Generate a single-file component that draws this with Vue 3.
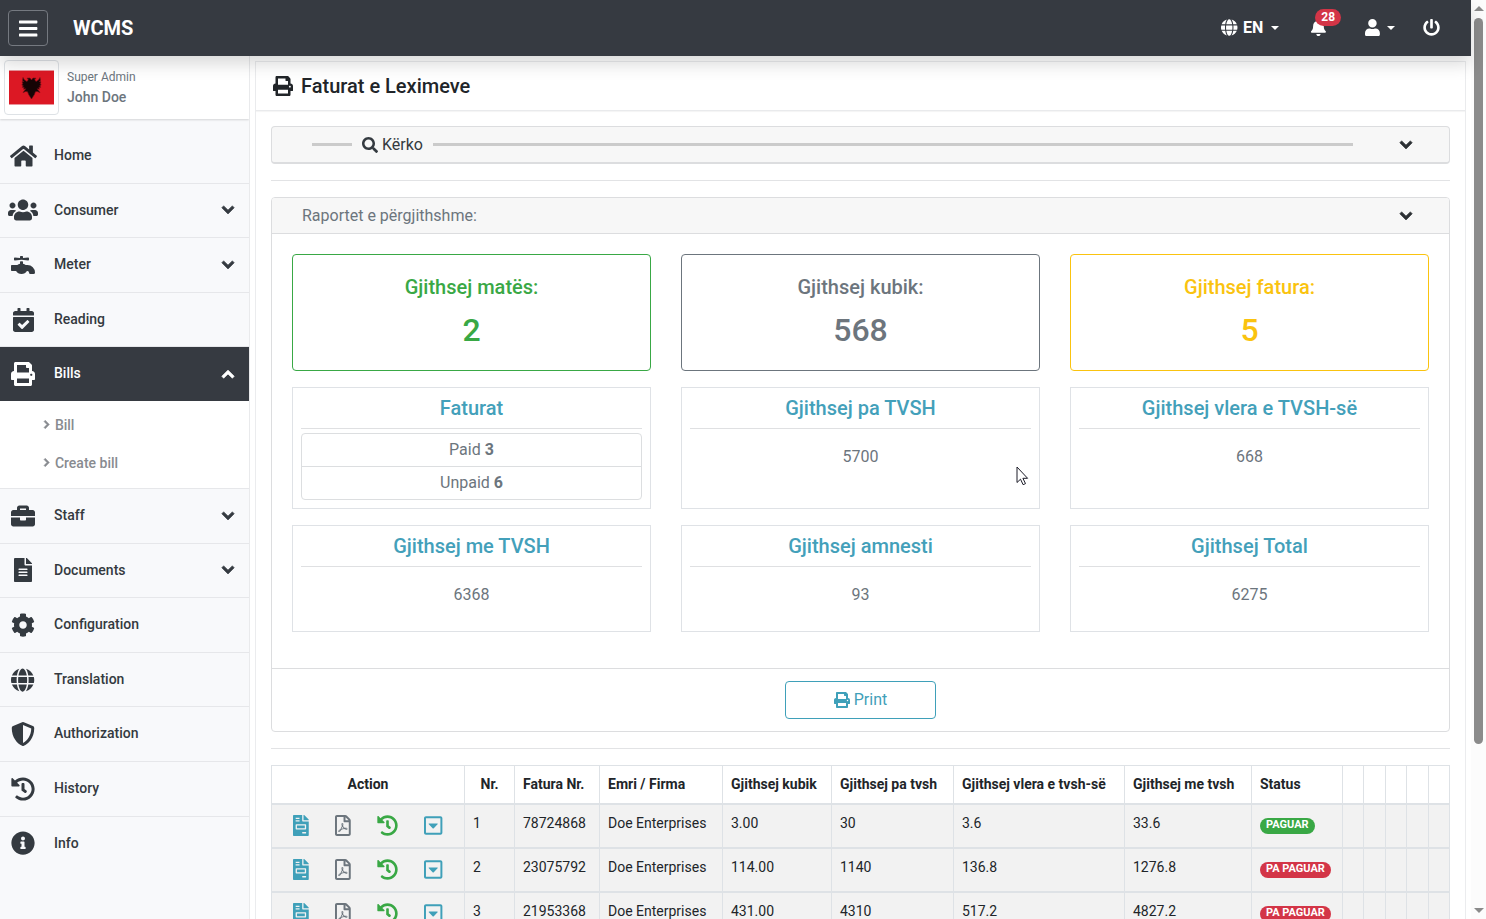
<script setup>
import { ref } from 'vue'

const icons = {
  bars: [448, 'M16 132h416c8.837 0 16-7.163 16-16V76c0-8.837-7.163-16-16-16H16C7.163 60 0 67.163 0 76v40c0 8.837 7.163 16 16 16zm0 160h416c8.837 0 16-7.163 16-16v-40c0-8.837-7.163-16-16-16H16c-8.837 0-16 7.163-16 16v40c0 8.837 7.163 16 16 16zm0 160h416c8.837 0 16-7.163 16-16v-40c0-8.837-7.163-16-16-16H16c-8.837 0-16 7.163-16 16v40c0 8.837 7.163 16 16 16z'],
  home: [576, 'M280.37 148.26L96 300.11V464a16 16 0 0 0 16 16l112.06-.29a16 16 0 0 0 15.92-16V368a16 16 0 0 1 16-16h64a16 16 0 0 1 16 16v95.64a16 16 0 0 0 16 16.05L464 480a16 16 0 0 0 16-16V300L295.67 148.26a12.19 12.19 0 0 0-15.3 0zM571.6 251.47L488 182.56V44.05a12 12 0 0 0-12-12h-56a12 12 0 0 0-12 12v72.61L318.47 43a48 48 0 0 0-61 0L4.34 251.47a12 12 0 0 0-1.6 16.9l25.5 31A12 12 0 0 0 45.15 301l235.22-193.74a12.19 12.19 0 0 1 15.3 0L530.9 301a12 12 0 0 0 16.9-1.6l25.5-31a12 12 0 0 0-1.7-16.93z'],
  users: [640, 'M96 224c35.3 0 64-28.7 64-64s-28.7-64-64-64-64 28.7-64 64 28.7 64 64 64zm448 0c35.3 0 64-28.7 64-64s-28.7-64-64-64-64 28.7-64 64 28.7 64 64 64zm32 32h-64c-17.6 0-33.5 7.1-45.1 18.6 40.3 22.1 68.9 62 75.1 109.4h66c17.7 0 32-14.3 32-32v-32c0-35.3-28.7-64-64-64zm-256 0c61.9 0 112-50.1 112-112S381.9 32 320 32 208 82.1 208 144s50.1 112 112 112zm76.8 32h-8.3c-20.8 10-43.9 16-68.5 16s-47.6-6-68.5-16h-8.3C179.6 288 128 339.6 128 403.2V432c0 26.5 21.5 48 48 48h288c26.5 0 48-21.5 48-48v-28.8c0-63.6-51.6-115.2-115.2-115.2zm-223.7-13.4C161.5 263.1 145.6 256 128 256H64c-35.3 0-64 28.7-64 64v32c0 17.7 14.3 32 32 32h65.9c6.3-47.4 34.9-87.3 75.2-109.4z'],
  faucet: [512, 'M352,256H313.39c-15.71-13.44-35.46-23.07-57.39-28V180.44l-32-3.38-32,3.38V228c-21.93,5-41.68,14.6-57.39,28H16A16,16,0,0,0,0,272v96a16,16,0,0,0,16,16h92.79C129.38,421.73,173,448,224,448s94.62-26.27,115.21-64H352a32,32,0,0,1,32,32,32,32,0,0,0,32,32h64a32,32,0,0,0,32-32A160,160,0,0,0,352,256ZM81.59,159.91l142.41-15,142.41,15c9.42,1,17.59-6.81,17.59-16.8V112.89c0-10-8.17-17.8-17.59-16.81L256,107.74V80a16,16,0,0,0-16-16H208a16,16,0,0,0-16,16v27.74L81.59,96.08C72.17,95.09,64,102.9,64,112.89v30.22C64,153.1,72.17,160.91,81.59,159.91Z'],
  calendar: [448, 'M436 160H12c-6.627 0-12-5.373-12-12v-36c0-26.51 21.49-48 48-48h48V12c0-6.627 5.373-12 12-12h40c6.627 0 12 5.373 12 12v52h128V12c0-6.627 5.373-12 12-12h40c6.627 0 12 5.373 12 12v52h48c26.51 0 48 21.49 48 48v36c0 6.627-5.373 12-12 12zM12 192h424c6.627 0 12 5.373 12 12v260c0 26.51-21.49 48-48 48H48c-26.51 0-48-21.49-48-48V204c0-6.627 5.373-12 12-12zm333.296 95.947l-28.169-28.398c-4.667-4.705-12.265-4.736-16.97-.068L194.12 364.665l-45.98-46.352c-4.667-4.705-12.266-4.736-16.971-.068l-28.397 28.17c-4.705 4.667-4.736 12.265-.068 16.97l82.601 83.269c4.667 4.705 12.265 4.736 16.97.068l142.953-141.805c4.705-4.667 4.736-12.265.068-16.97z'],
  print: [512, 'M448 192V77.25c0-8.49-3.37-16.62-9.37-22.63L393.37 9.37c-6-6-14.14-9.37-22.63-9.37H96C78.33 0 64 14.33 64 32v160c-35.35 0-64 28.65-64 64v112c0 8.84 7.16 16 16 16h48v96c0 17.67 14.33 32 32 32h320c17.67 0 32-14.33 32-32v-96h48c8.84 0 16-7.16 16-16V256c0-35.35-28.65-64-64-64zm-64 256H128v-96h256v96zm0-224H128V64h192v48c0 8.84 7.16 16 16 16h48v96zm48 72c-13.25 0-24-10.75-24-24 0-13.26 10.75-24 24-24s24 10.74 24 24c0 13.25-10.75 24-24 24z'],
  briefcase: [512, 'M320 336c0 8.84-7.16 16-16 16h-96c-8.84 0-16-7.16-16-16v-48H0v144c0 25.6 22.4 48 48 48h416c25.6 0 48-22.4 48-48V288H320v48zm144-208h-80V80c0-25.6-22.4-48-48-48H176c-25.6 0-48 22.4-48 48v48H48c-25.6 0-48 22.4-48 48v80h512v-80c0-25.6-22.4-48-48-48zm-144 0H192V96h128v32z'],
  file: [384, 'M224 136V0H24C10.7 0 0 10.7 0 24v464c0 13.3 10.7 24 24 24h336c13.3 0 24-10.7 24-24V160H248c-13.2 0-24-10.8-24-24zm64 236c0 6.6-5.4 12-12 12H108c-6.6 0-12-5.4-12-12v-8c0-6.6 5.4-12 12-12h168c6.6 0 12 5.4 12 12v8zm0-64c0 6.6-5.4 12-12 12H108c-6.6 0-12-5.4-12-12v-8c0-6.6 5.4-12 12-12h168c6.6 0 12 5.4 12 12v8zm0-72v8c0 6.6-5.4 12-12 12H108c-6.6 0-12-5.4-12-12v-8c0-6.6 5.4-12 12-12h168c6.6 0 12 5.4 12 12zm96-114.1v6.1H256V0h6.1c6.4 0 12.5 2.5 17 7l97.9 98c4.5 4.5 7 10.6 7 16.9z'],
  cog: [512, 'M487.4 315.7l-42.6-24.6c4.3-23.2 4.3-47 0-70.2l42.6-24.6c4.9-2.8 7.1-8.6 5.5-14-11.1-35.6-30-67.8-54.7-94.6-3.8-4.1-10-5.1-14.8-2.3L380.8 110c-17.9-15.4-38.5-27.3-60.8-35.1V25.8c0-5.6-3.9-10.5-9.4-11.7-36.7-8.2-74.3-7.8-109.2 0-5.5 1.2-9.4 6.1-9.4 11.7V75c-22.2 7.9-42.8 19.8-60.8 35.1L88.7 85.5c-4.9-2.8-11-1.9-14.8 2.3-24.7 26.7-43.6 58.9-54.7 94.6-1.7 5.4.6 11.2 5.5 14L67.3 221c-4.3 23.2-4.3 47 0 70.2l-42.6 24.6c-4.9 2.8-7.1 8.6-5.5 14 11.1 35.6 30 67.8 54.7 94.6 3.8 4.1 10 5.1 14.8 2.3l42.6-24.6c17.9 15.4 38.5 27.3 60.8 35.1v49.2c0 5.6 3.9 10.5 9.4 11.7 36.7 8.2 74.3 7.8 109.2 0 5.5-1.2 9.4-6.1 9.4-11.7v-49.2c22.2-7.9 42.8-19.8 60.8-35.1l42.6 24.6c4.9 2.8 11 1.9 14.8-2.3 24.7-26.7 43.6-58.9 54.7-94.6 1.5-5.5-.7-11.3-5.6-14.1zM256 336c-44.1 0-80-35.9-80-80s35.9-80 80-80 80 35.9 80 80-35.9 80-80 80z'],
  globe: [496, 'M336.5 160C322 70.7 287.8 8 248 8s-74 62.7-88.5 152h177zM152 256c0 22.2 1.2 43.5 3.3 64h185.3c2.1-20.5 3.3-41.8 3.3-64s-1.2-43.5-3.3-64H155.3c-2.1 20.5-3.3 41.8-3.3 64zm324.7-96c-28.6-67.9-86.5-120.4-158-141.6 24.4 33.8 41.2 84.7 50 141.6h108zM177.2 18.4C105.8 39.6 47.8 92.1 19.3 160h108c8.7-56.9 25.5-107.8 49.9-141.6zM487.4 192H372.7c2.1 21 3.3 42.5 3.3 64s-1.2 43-3.3 64h114.6c5.5-20.5 8.6-41.8 8.6-64s-3.1-43.5-8.5-64zM120 256c0-21.5 1.2-43 3.3-64H8.6C3.2 212.5 0 233.8 0 256s3.2 43.5 8.6 64h114.6c-2-21-3.2-42.5-3.2-64zm39.5 96c14.5 89.3 48.7 152 88.5 152s74-62.7 88.5-152h-177zm159.3 141.6c71.4-21.2 129.4-73.7 158-141.6h-108c-8.8 56.9-25.6 107.8-50 141.6zM19.3 352c28.6 67.9 86.5 120.4 158 141.6-24.4-33.8-41.2-84.7-50-141.6h-108z'],
  shield: [512, 'M466.5 83.7l-192-80a48.15 48.15 0 0 0-36.9 0l-192 80C27.7 91.1 16 108.6 16 128c0 198.5 114.5 335.7 221.5 380.3 11.8 4.9 25.1 4.9 36.9 0C360.1 472.6 496 349.3 496 128c0-19.4-11.7-36.9-29.5-44.3zM256.1 446.3l-.1-381 175.9 73.3c-3.3 151.4-82.1 261.1-175.8 307.7z'],
  history: [512, 'M504 255.531c.253 136.64-111.18 248.372-247.82 248.468-59.015.042-113.223-20.53-155.822-54.911-11.077-8.94-11.905-25.541-1.839-35.607l11.267-11.267c8.609-8.609 22.353-9.551 31.891-1.984C173.062 425.135 212.781 440 256 440c101.705 0 184-82.311 184-184 0-101.705-82.311-184-184-184-48.814 0-93.149 18.969-126.068 49.932l50.754 50.754c10.08 10.08 2.941 27.314-11.313 27.314H24c-8.837 0-16-7.163-16-16V38.627c0-14.254 17.234-21.393 27.314-11.314l49.372 49.372C129.209 34.136 189.552 8 256 8c136.81 0 247.747 110.78 248 247.531zm-180.912 78.784l9.823-12.63c8.138-10.463 6.253-25.542-4.21-33.679L288 256.349V152c0-13.255-10.745-24-24-24h-16c-13.255 0-24 10.745-24 24v135.651l65.409 50.874c10.463 8.137 25.541 6.253 33.679-4.21z'],
  info: [512, 'M256 8C119.043 8 8 119.083 8 256c0 136.997 111.043 248 248 248s248-111.003 248-248C504 119.083 392.957 8 256 8zm0 110c23.196 0 42 18.804 42 42s-18.804 42-42 42-42-18.804-42-42 18.804-42 42-42zm56 254c0 6.627-5.373 12-12 12h-88c-6.627 0-12-5.373-12-12v-24c0-6.627 5.373-12 12-12h12v-64h-12c-6.627 0-12-5.373-12-12v-24c0-6.627 5.373-12 12-12h64c6.627 0 12 5.373 12 12v100h12c6.627 0 12 5.373 12 12v24z'],
  bell: [448, 'M224 512c35.32 0 63.97-28.65 63.97-64H160.03c0 35.35 28.65 64 63.97 64zm215.39-149.71c-19.32-20.76-55.47-51.99-55.47-154.29 0-77.7-54.48-139.9-127.94-155.16V32c0-17.67-14.32-32-31.98-32s-31.98 14.33-31.98 32v20.84C118.56 68.1 64.08 130.3 64.08 208c0 102.3-36.15 133.53-55.47 154.29-6 6.45-8.66 14.16-8.61 21.71.11 16.4 12.98 32 32.1 32h383.8c19.12 0 32-15.6 32.1-32 .05-7.55-2.61-15.27-8.61-21.71z'],
  user: [448, 'M224 256c70.7 0 128-57.3 128-128S294.7 0 224 0 96 57.3 96 128s57.3 128 128 128zm89.6 32h-16.7c-22.2 10.2-46.9 16-72.9 16s-50.6-5.8-72.9-16h-16.7C60.2 288 0 348.2 0 422.4V464c0 26.5 21.5 48 48 48h352c26.5 0 48-21.5 48-48v-41.6c0-74.2-60.2-134.4-134.4-134.4z'],
  power: [512, 'M400 54.1c63 45 104 118.6 104 201.9 0 136.8-110.8 247.7-247.5 248C120 504.3 8.2 393 8 256.4 7.9 173.1 48.9 99.3 111.8 54.2c11.7-8.3 28-4.8 35 7.7L162.6 90c5.9 10.5 3.1 23.8-6.6 31-41.5 30.8-68 79.6-68 134.9-.1 92.3 74.5 168.1 168 168.1 91.6 0 168.6-74.2 168-169.1-.3-51.8-24.7-101.8-68.1-134-9.7-7.2-12.4-20.5-6.5-30.9l15.8-28.1c7-12.4 23.2-16.1 34.8-7.8zM296 264V24c0-13.3-10.7-24-24-24h-32c-13.3 0-24 10.7-24 24v240c0 13.3 10.7 24 24 24h32c13.3 0 24-10.7 24-24z'],
  search: [512, 'M505 442.7L405.3 343c-4.5-4.5-10.6-7-17-7H372c27.6-35.3 44-79.7 44-128C416 93.1 322.9 0 208 0S0 93.1 0 208s93.1 208 208 208c48.3 0 92.7-16.4 128-44v16.3c0 6.4 2.5 12.5 7 17l99.7 99.7c9.4 9.4 24.6 9.4 33.9 0l28.3-28.3c9.4-9.4 9.4-24.6.1-34zM208 336c-70.7 0-128-57.2-128-128 0-70.7 57.2-128 128-128 70.7 0 128 57.2 128 128 0 70.7-57.2 128-128 128z'],
  down: [448, 'M224 380L28 184 84 124 224 260 364 124 420 184Z'],
  right: [320, 'M296 256L104 450 48 392 182 256 48 120 104 62Z'],
  invoice: [384, 'M288 256H96v64h192v-64zm89-151L279.1 7c-4.5-4.5-10.6-7-17-7H256v128h128v-6.1c0-6.3-2.5-12.4-7-16.9zm-153 31V0H24C10.7 0 0 10.7 0 24v464c0 13.3 10.7 24 24 24h336c13.3 0 24-10.7 24-24V160H248c-13.2 0-24-10.8-24-24zM64 72c0-4.42 3.58-8 8-8h80c4.42 0 8 3.58 8 8v16c0 4.42-3.58 8-8 8H72c-4.42 0-8-3.58-8-8V72zm0 64c0-4.42 3.58-8 8-8h80c4.42 0 8 3.58 8 8v16c0 4.42-3.58 8-8 8H72c-4.42 0-8-3.58-8-8v-16zm256 304c0 4.42-3.58 8-8 8h-80c-4.42 0-8-3.58-8-8v-16c0-4.42 3.58-8 8-8h80c4.42 0 8 3.58 8 8v16zm0-200v96c0 8.84-7.16 16-16 16H80c-8.84 0-16-7.16-16-16v-96c0-8.84 7.16-16 16-16h224c8.84 0 16 7.16 16 16z'],
  pdf: [384, 'M369.9 97.9L286 14C277 5 264.8-.1 252.1-.1H48C21.5 0 0 21.5 0 48v416c0 26.5 21.5 48 48 48h288c26.5 0 48-21.5 48-48V131.9c0-12.7-5.1-25-14.1-34zM332.1 128H256V51.9l76.1 76.1zM48 464V48h160v104c0 13.3 10.7 24 24 24h104v288H48zm250.2-143.7c-12.2-12-47-8.7-64.4-6.5-17.2-10.5-28.7-25-36.8-46.3 3.9-16.1 10.1-40.6 5.4-56-4.2-26.2-37.8-23.6-42.6-5.9-4.4 16.1-.4 38.5 7 67.1-10 23.9-24.9 56-35.4 74.4-20 10.3-47 26.2-51 46.2-3.3 15.8 26 55.2 76.1-31.2 22.4-7.4 46.8-16.5 68.4-20.1 18.9 10.2 41 17 55.8 17 25.5 0 28-28.2 17.5-38.7zm-198.1 77.8c5.1-13.7 24.5-29.5 30.4-35-19 30.3-30.4 35.7-30.4 35zm81.6-190.6c7.4 0 6.7 32.1 1.8 40.8-4.4-13.9-4.3-40.8-1.8-40.8zm-24.4 136.6c9.7-16.9 18-37 24.7-54.7 8.3 15.1 18.9 27.2 30.1 35.5-20.8 4.3-38.9 13.1-54.8 19.2zm131.6-5s-5 6-37.3-7.8c35.1-2.6 40.9 5.4 37.3 7.8z'],
  caretBox: [448, 'M125.1 208h197.8c10.7 0 16.1 13 8.5 20.5l-98.9 98.3c-4.7 4.7-12.2 4.7-16.9 0l-98.9-98.3c-7.7-7.5-2.3-20.5 8.4-20.5zM448 80v352c0 26.5-21.5 48-48 48H48c-26.5 0-48-21.5-48-48V80c0-26.5 21.5-48 48-48h352c26.5 0 48 21.5 48 48zm-48 346V86c0-3.3-2.7-6-6-6H54c-3.3 0-6 2.7-6 6v340c0 3.3 2.7 6 6 6h340c3.3 0 6-2.7 6-6z'],
}
const box = (name) => `0 0 ${icons[name][0]} 512`
const shape = (name) => icons[name][1]

const menu = [
  { label: 'Home', icon: 'home' },
  { label: 'Consumer', icon: 'users', group: true },
  { label: 'Meter', icon: 'faucet', group: true },
  { label: 'Reading', icon: 'calendar' },
  { label: 'Bills', icon: 'print', group: true, children: ['Bill', 'Create bill'] },
  { label: 'Staff', icon: 'briefcase', group: true },
  { label: 'Documents', icon: 'file', group: true },
  { label: 'Configuration', icon: 'cog' },
  { label: 'Translation', icon: 'globe' },
  { label: 'Authorization', icon: 'shield' },
  { label: 'History', icon: 'history' },
  { label: 'Info', icon: 'info' },
]
const active = ref('Bills')
const toggle = (label) => { active.value = active.value === label ? '' : label }

const totals = [
  { label: 'Gjithsej matës:', value: 2, tone: 'green' },
  { label: 'Gjithsej kubik:', value: 568, tone: 'grey' },
  { label: 'Gjithsej fatura:', value: 5, tone: 'yellow' },
]
const sums = [
  { label: 'Faturat', split: [['Paid', 3], ['Unpaid', 6]] },
  { label: 'Gjithsej pa TVSH', value: 5700 },
  { label: 'Gjithsej vlera e TVSH-së', value: 668 },
  { label: 'Gjithsej me TVSH', value: 6368 },
  { label: 'Gjithsej amnesti', value: 93 },
  { label: 'Gjithsej Total', value: 6275 },
]

const columns = [
  { label: 'Action', width: 193 },
  { label: 'Nr.', width: 50 },
  { label: 'Fatura Nr.', width: 85 },
  { label: 'Emri / Firma', width: 123 },
  { label: 'Gjithsej kubik', width: 109 },
  { label: 'Gjithsej pa tvsh', width: 122 },
  { label: 'Gjithsej vlera e tvsh-së', width: 171 },
  { label: 'Gjithsej me tvsh', width: 127 },
  { label: 'Status', width: 91 },
  { label: '', width: 21 },
  { label: '', width: 22 },
  { label: '', width: 21 },
  { label: '', width: 22 },
  { label: '', width: 21 },
]
const rows = [
  { cells: ['1', '78724868', 'Doe Enterprises', '3.00', '30', '3.6', '33.6'], paid: true },
  { cells: ['2', '23075792', 'Doe Enterprises', '114.00', '1140', '136.8', '1276.8'], paid: false },
  { cells: ['3', '21953368', 'Doe Enterprises', '431.00', '4310', '517.2', '4827.2'], paid: false },
]
const actions = [
  { icon: 'invoice', tone: 'teal', label: 'Invoice' },
  { icon: 'pdf', tone: 'grey', label: 'PDF' },
  { icon: 'history', tone: 'green', label: 'History' },
  { icon: 'caretBox', tone: 'teal', label: 'More' },
]
</script>

<template>
  <div class="page">
    <div class="app">
      <header class="topbar">
        <button class="burger" aria-label="Menu">
          <svg class="icon" :viewBox="box('bars')"><path :d="shape('bars')" /></svg>
        </button>
        <a class="brand" href="#">WCMS</a>
        <nav class="tools">
          <button class="tool language">
            <svg class="icon" :viewBox="box('globe')"><path :d="shape('globe')" /></svg>
            <span>EN</span><i class="caret"></i>
          </button>
          <button class="tool alerts" aria-label="Notifications">
            <svg class="icon" :viewBox="box('bell')"><path :d="shape('bell')" /></svg>
            <span class="count">28</span>
          </button>
          <button class="tool account" aria-label="Account">
            <svg class="icon" :viewBox="box('user')"><path :d="shape('user')" /></svg>
            <i class="caret"></i>
          </button>
          <button class="tool" aria-label="Log out">
            <svg class="icon" :viewBox="box('power')"><path :d="shape('power')" /></svg>
          </button>
        </nav>
      </header>

      <div class="columns">
        <aside class="sidebar">
          <div class="profile">
            <div class="photo">
              <svg viewBox="0 0 45 35" class="flag">
                <rect width="45" height="35" fill="#dc1824" />
                <path d="M0 .5h45M0 34.5h45" stroke="#e9939a" />
                <path d="M22.500 10l-1.500-2-3 .2 1.300 1.500-1.300 1.800-2.500-1.500-1.500-2.500-.500 3 1.200 1-1.700 .3.800 2-1 1.200 1.600 .8-1.200 1.400 2 .2-.6 1.800 2.200-.4-2.800 3.800 2.800-1.200 1.800 .4 1 2.700 2.900 4.500 2.900-4.500 1-2.700 1.800-.4 2.800 1.200-2.800-3.800 2.200 .4-.6-1.800 2-.2-1.200-1.400 1.600-.8-1-1.200.8-2-1.700-.3 1.200-1-.5-3-1.500 2.500-2.500 1.500-1.300-1.800 1.300-1.500-3-.2z" fill="#160405" stroke="#701018" stroke-width="1" stroke-opacity=".6" />
              </svg>
            </div>
            <div class="person">
              <span class="role">Super Admin</span>
              <strong class="name">John Doe</strong>
            </div>
          </div>
          <nav class="menu">
            <div v-for="item in menu" :key="item.label" class="entry">
              <button class="item" :class="{ active: active === item.label }" @click="toggle(item.label)">
                <span class="glyph"><svg class="icon" :viewBox="box(item.icon)"><path :d="shape(item.icon)" /></svg></span>
                <span class="label">{{ item.label }}</span>
                <svg v-if="item.group" class="icon chevron arrow" :viewBox="box('down')"><path :d="shape('down')" /></svg>
              </button>
              <div v-if="item.children && active === item.label" class="submenu">
                <a v-for="child in item.children" :key="child" href="#">
                  <svg class="icon chevron" :viewBox="box('right')"><path :d="shape('right')" /></svg>{{ child }}
                </a>
              </div>
            </div>
          </nav>
        </aside>

        <main class="main">
          <div class="panel">
            <h1 class="title">
              <svg class="icon" :viewBox="box('print')"><path :d="shape('print')" /></svg>
              Faturat e Leximeve
            </h1>
            <div class="content">
              <button class="search">
                <i class="line short"></i>
                <svg class="icon" :viewBox="box('search')"><path :d="shape('search')" /></svg>
                <span>Kërko</span>
                <i class="line"></i>
                <svg class="icon chevron open" :viewBox="box('down')"><path :d="shape('down')" /></svg>
              </button>
              <hr>
              <section class="card">
                <button class="card-head">
                  <span>Raportet e përgjithshme:</span>
                  <svg class="icon chevron open" :viewBox="box('down')"><path :d="shape('down')" /></svg>
                </button>
                <div class="report">
                  <div v-for="t in totals" :key="t.label" class="total" :class="t.tone">
                    <h5>{{ t.label }}</h5>
                    <p>{{ t.value }}</p>
                  </div>
                  <div v-for="s in sums" :key="s.label" class="sum">
                    <h5>{{ s.label }}</h5>
                    <ul v-if="s.split">
                      <li v-for="[k, v] in s.split" :key="k">{{ k }} <b>{{ v }}</b></li>
                    </ul>
                    <p v-else>{{ s.value }}</p>
                  </div>
                </div>
                <footer class="card-foot">
                  <button class="print">
                    <svg class="icon" :viewBox="box('print')"><path :d="shape('print')" /></svg>Print
                  </button>
                </footer>
              </section>
              <hr>
              <table class="bills">
                <colgroup>
                  <col v-for="(c, i) in columns" :key="i" :style="{ width: c.width + 'px' }">
                </colgroup>
                <thead>
                  <tr><th v-for="(c, i) in columns" :key="i">{{ c.label }}</th></tr>
                </thead>
                <tbody>
                  <tr v-for="r in rows" :key="r.cells[0]">
                    <td>
                      <div class="actions">
                        <button v-for="a in actions" :key="a.label" :class="a.tone" :aria-label="a.label">
                          <svg class="icon" :viewBox="box(a.icon)"><path :d="shape(a.icon)" /></svg>
                        </button>
                      </div>
                    </td>
                    <td v-for="(c, i) in r.cells" :key="i">{{ c }}</td>
                    <td><span class="badge" :class="{ paid: r.paid }">{{ r.paid ? 'PAGUAR' : 'PA PAGUAR' }}</span></td>
                    <td v-for="n in 5" :key="'e' + n"></td>
                  </tr>
                </tbody>
              </table>
            </div>
          </div>
        </main>
      </div>
    </div>

    <div class="scrollbar" aria-hidden="true">
      <i class="up"></i>
      <i class="thumb"></i>
      <i class="down"></i>
    </div>

    <svg class="pointer" viewBox="0 0 13 20" aria-hidden="true">
      <path d="M1 1v15.500l3.500-3.300 2.600 5.500 2.400-1.100-2.600-5.300h4.700z" fill="#fff" stroke="#1c1c28" />
    </svg>
  </div>
</template>

<style>
body { overflow: hidden; }
</style>

<style scoped>
.page, .page * { box-sizing: border-box; }
.page {
  display: flex;
  height: 100vh;
  overflow: hidden;
  background: #fff;
  color: #212529;
  font: 16px/24px Roboto, "Liberation Sans", sans-serif;
}
button {
  font: inherit;
  color: inherit;
  background: none;
  border: 0;
  padding: 0;
  margin: 0;
  cursor: pointer;
}
a { color: inherit; text-decoration: none; }
h1, h5, p, ul { margin: 0; padding: 0; font-weight: 500; }
.icon { height: 16px; display: block; flex: none; fill: currentColor; overflow: visible; }
.chevron { stroke: currentColor; stroke-width: 24; stroke-linejoin: round; }

.green { color: #39a845; }
.grey { color: #6c757d; }
.yellow { color: #fac30f; }
.teal { color: #3fa0b9; }

.app { flex: 1; min-width: 0; display: flex; flex-direction: column; }
.topbar {
  position: relative;
  z-index: 2;
  flex: none;
  display: flex;
  align-items: center;
  height: 56px;
  padding: 0 31px 0 8px;
  background: #363a41;
  color: #fff;
  box-shadow: 0 8px 16px rgba(0, 0, 0, .15);
}
.burger {
  display: grid;
  place-items: center;
  width: 40px;
  height: 36px;
  border: 1px solid #757980;
  border-radius: 4px;
}
.burger .icon { height: 21px; }
.brand { margin-left: 25px; font-size: 20px; font-weight: 700; }
.tools { display: flex; align-items: center; margin-left: auto; }
.tool { display: flex; align-items: center; font-weight: 700; }
.tool .icon { height: 17px; margin-top: -1px; }
.language { gap: 5px; margin-right: 32px; }
.alerts { position: relative; margin-right: 39px; }
.account { gap: 7px; margin-right: 28px; }
.language .caret { margin-left: 3px; }
.caret { margin-top: -1px; border: 4px solid transparent; border-top-color: currentColor; border-bottom: 0; }
.count {
  position: absolute;
  left: 4px;
  top: -11px;
  padding: 0 6px;
  border-radius: 9px;
  background: #d33547;
  font-size: 12px;
  line-height: 17px;
}

.columns { flex: 1; min-height: 0; display: flex; }
.sidebar {
  flex: none;
  width: 250px;
  overflow: hidden;
  background: #f8f9fb;
  border-right: 1px solid #e9eaec;
}
.profile {
  display: flex;
  align-items: center;
  gap: 8px;
  height: 63px;
  padding-left: 4px;
  background: #fff;
  box-shadow: 0 1px 2px rgba(0, 0, 0, .15);
}
.photo {
  display: grid;
  place-items: center;
  width: 55px;
  height: 55px;
  border: 1px solid #dee2e6;
  border-radius: 4px;
}
.flag { width: 45px; height: 35px; }
.person { display: flex; flex-direction: column; padding-bottom: 2px; color: #6c757d; line-height: 20px; }
.role { font-size: 12px; }
.name { font-size: 14px; font-weight: 500; }
.menu { padding-top: 10px; }
.item {
  display: flex;
  align-items: center;
  width: 100%;
  padding: 17px 14px 17px 8px;
  border-bottom: 1px solid #e6e7ea;
  color: #343a40;
  font-size: 14px;
  font-weight: 500;
  line-height: 1.4;
  text-align: left;
}
.entry:last-child .item { border-bottom: 0; }
.item.active { background: #363a41; background-clip: padding-box; border-color: #fff; color: #fff; }
.glyph { display: flex; align-items: center; justify-content: center; width: 30px; height: 16px; }
.glyph .icon { height: 24px; }
.label { flex: 1; margin-left: 16px; }
.active .arrow { transform: rotate(180deg); }
.submenu { padding: 4px 0 6px 43px; background: #fff; border-bottom: 1px solid #e6e7ea; }
.submenu a {
  display: flex;
  align-items: center;
  gap: 5px;
  color: #888b90;
  font-size: 14px;
  font-weight: 500;
  line-height: 38px;
}
.submenu .icon { height: 11px; }

.main { flex: 1; min-width: 0; padding: 5px 5px 0; overflow: hidden; }
.panel { border: 1px solid #ebecee; }
.title {
  display: flex;
  align-items: center;
  gap: 8px;
  height: 49px;
  padding-left: 17px;
  border-bottom: 1px solid #e9eaec;
  box-shadow: 0 1px 1px rgba(0, 0, 0, .04);
  font-size: 20px;
}
.title .icon { height: 20px; }
.content { padding: 15px; }
.content hr { margin: 16px 0; border: 0; border-top: 1px solid #e2e3e5; }
.search, .card-head {
  display: flex;
  align-items: center;
  width: 100%;
  padding: 0 36px 0 40px;
  background: #f7f7f7;
}
.search {
  height: 38px;
  border: 1px solid #dcdddf;
  border-bottom-width: 2px;
  border-radius: 4px;
  color: #343a40;
}
.search span { margin: 0 10px 0 4px; }
.line { flex: 1; height: 3px; background: #cbcbcb; }
.short { flex: none; width: 40px; margin-right: 10px; }
.search .open { margin-left: 46px; }
.card { border: 1px solid #dcdddf; border-radius: 4px; }
.card-head { height: 36px; padding-left: 30px; border-radius: 3px 3px 0 0; border-bottom: 1px solid #dcdddf; }
.card-head span { flex: 1; text-align: left; color: #6c757d; }
.open { color: #2b2f33; }

.report {
  display: grid;
  grid-template-columns: repeat(3, 1fr);
  gap: 16px 30px;
  padding: 20px 20px 36px;
  text-align: center;
}
.report h5 { font-size: 20px; line-height: 24px; }
.total { padding: 20px; border: 1px solid currentColor; border-radius: 4px; }
.total h5 { margin-bottom: 12px; }
.total p { font-size: 32px; line-height: 39px; }
.sum { padding: 8px; border: 1px solid #dfe2e6; }
.sum h5 { padding-bottom: 8px; border-bottom: 1px solid #dfe0e2; color: #43a0ba; }
.sum p { padding: 16px 0; color: #6c757d; font-weight: 400; }
.sum ul { margin-top: 4px; border: 1px solid #dcdee0; border-radius: 4px; list-style: none; }
.sum li { color: #6c757d; font-weight: 400; line-height: 32px; }
.sum li + li { border-top: 1px solid #dcdee0; }
.sum b { font-weight: 700; }
.card-foot { display: flex; justify-content: center; padding: 12px; border-top: 1px solid #dcdddf; }
.print {
  display: flex;
  align-items: center;
  justify-content: center;
  gap: 4px;
  width: 151px;
  height: 38px;
  border: 1px solid #3fa0b9;
  border-radius: 4px;
  color: #3fa0b9;
}

.bills {
  width: 100%;
  table-layout: fixed;
  border-collapse: collapse;
  font-size: 14px;
  line-height: 20px;
}
.bills th, .bills td { border: 1px solid #dee2e6; padding: 8px; text-align: left; white-space: nowrap; }
.bills th { height: 38px; border-bottom-width: 2px; font-weight: 700; }
.bills th:first-child, .bills th:nth-child(2) { text-align: center; }
.bills td { height: 44px; border-bottom-width: 2px; background: #f2f2f2; vertical-align: top; }
.bills td:nth-child(n + 10), .bills th:nth-child(n + 10) { padding: 0; }
.actions { display: flex; align-items: center; gap: 26px; padding: 2px 0 0 13px; }
.actions .icon { height: 21px; }
.badge {
  display: inline-block;
  margin-top: 5px;
  padding: 0 6px 2px;
  border-radius: 8px;
  background: #d33547;
  color: #fff;
  font-size: 11px;
  font-weight: 700;
  line-height: 14px;
  vertical-align: top;
}
.badge.paid { background: #39a845; }

.scrollbar {
  flex: none;
  display: flex;
  flex-direction: column;
  align-items: center;
  width: 15px;
  padding: 6px 0;
  background: #fcfcfc;
}
.up, .down { border: 5px solid transparent; }
.up { border-top: 0; border-bottom-color: #8b8b8b; }
.down { margin-top: auto; border-bottom: 0; border-top-color: #8b8b8b; }
.thumb { width: 9px; height: 80%; margin-top: 7px; border-radius: 5px; background: #8b8b8b; }

.pointer { position: absolute; left: 1016px; top: 466px; width: 13px; height: 20px; }
</style>
